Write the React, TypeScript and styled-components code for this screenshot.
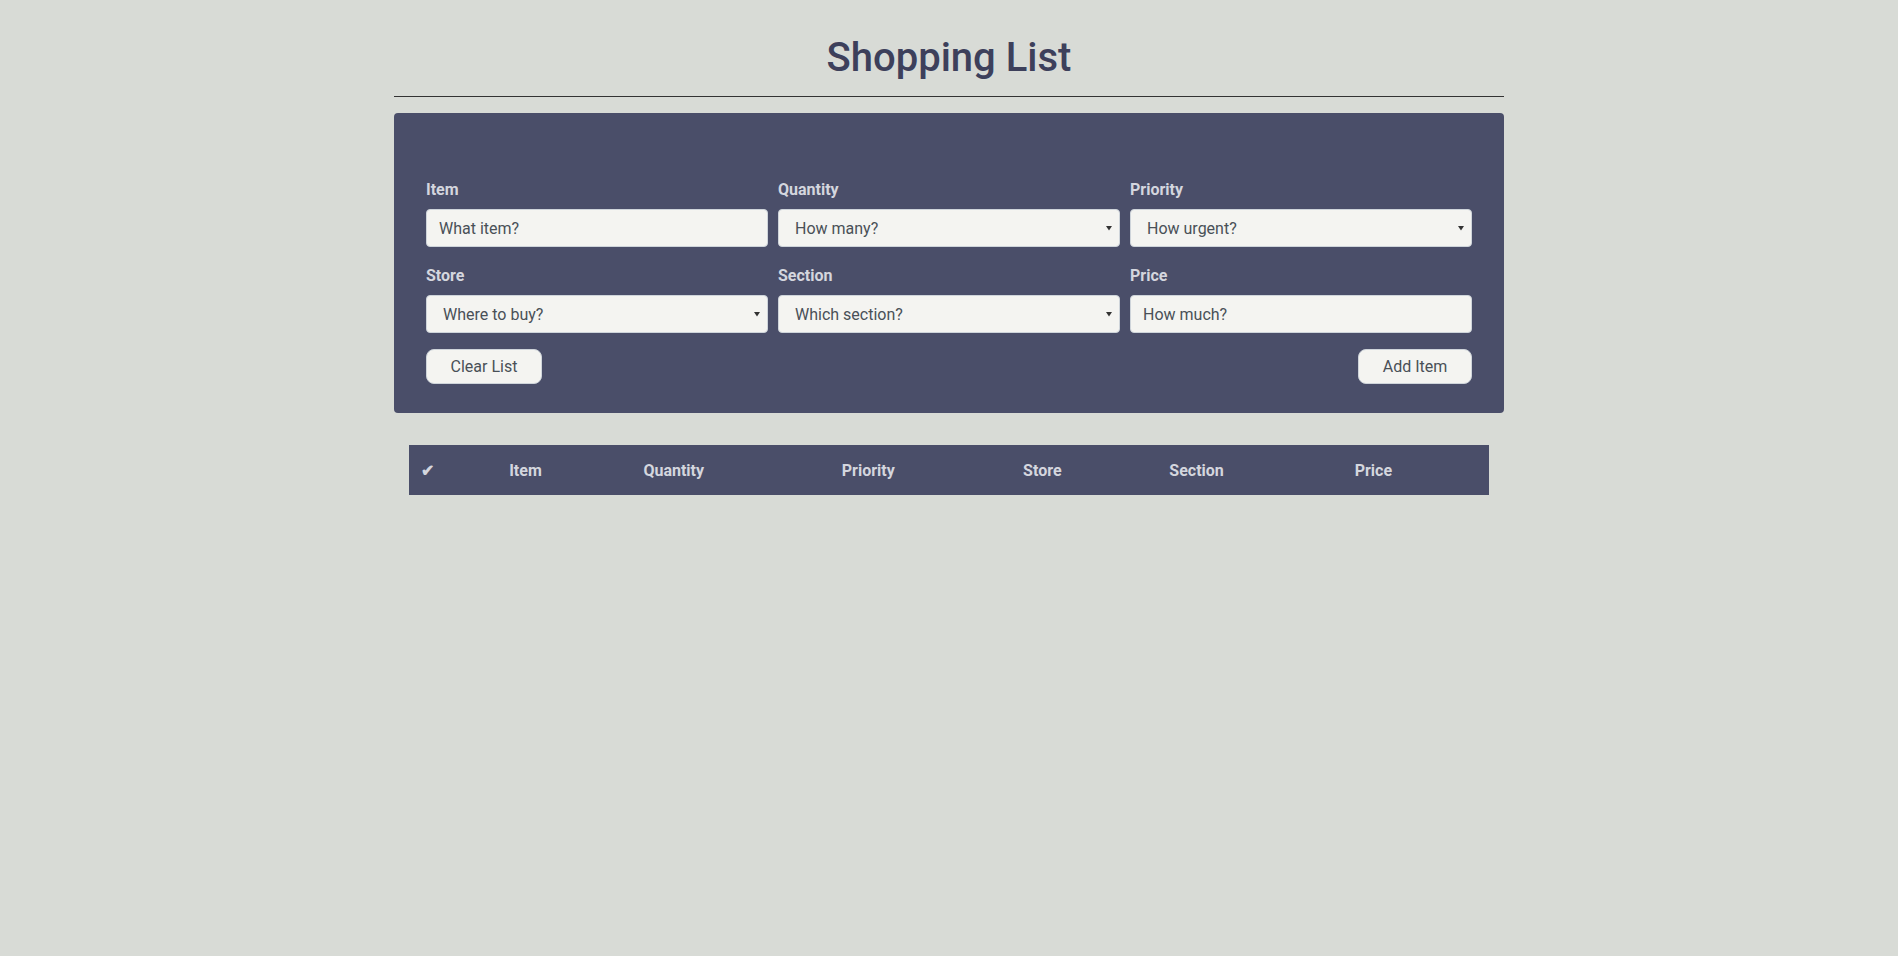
import styled, { createGlobalStyle } from "styled-components";
import React, { useState } from "react";

const GlobalStyle = createGlobalStyle`
  html, body {
    margin: 0;
    padding: 0;
    background-color: #d8dbd6;
    font-family: Roboto, "Liberation Sans", sans-serif;
  }
  * {
    box-sizing: border-box;
  }
`;

const Container = styled.div`
  max-width: 1140px;
  margin: 0 auto;
  padding: 0 15px;
`;

const Title = styled.h1`
  margin: 0;
  padding-top: 34px;
  padding-bottom: 14px;
  text-align: center;
  font-size: 40px;
  font-weight: 500;
  line-height: 1.2;
  color: #3d405b;
`;

const Divider = styled.hr`
  margin: 0 0 16px;
  border: none;
  border-top: 1px solid #333;
`;

const Panel = styled.form`
  background-color: #4a4e69;
  border-radius: 4px;
  padding: 67px 32px 29px;
`;

const FieldGrid = styled.div`
  display: grid;
  grid-template-columns: repeat(3, 1fr);
  column-gap: 10px;
  row-gap: 19px;
`;

const Field = styled.div`
  display: flex;
  flex-direction: column;
`;

const Label = styled.label`
  font-size: 16px;
  font-weight: 700;
  color: #d4d6de;
  margin-bottom: 10px;
  line-height: 1.2;
`;

const TextInput = styled.input`
  height: 38px;
  width: 100%;
  padding: 6px 12px;
  font-family: Roboto, "Liberation Sans", sans-serif;
  font-size: 16px;
  color: #495057;
  background-color: #f4f4f1;
  border: 1px solid #ced4da;
  border-radius: 4px;
  &::placeholder {
    color: #495057;
    opacity: 1;
  }
  &:focus {
    outline: none;
  }
`;

const SelectWrap = styled.div`
  position: relative;
`;

const Select = styled.select`
  appearance: none;
  -webkit-appearance: none;
  height: 38px;
  width: 100%;
  padding: 6px 12px 6px 16px;
  font-family: Roboto, "Liberation Sans", sans-serif;
  font-size: 16px;
  color: #495057;
  background-color: #f4f4f1;
  border: 1px solid #ced4da;
  border-radius: 4px;
  &:focus {
    outline: none;
  }
`;

const Caret = styled.svg`
  position: absolute;
  right: 8px;
  top: 16px;
  width: 6px;
  height: 6px;
  pointer-events: none;
`;

const ButtonRow = styled.div`
  display: flex;
  justify-content: space-between;
  margin-top: 16px;
`;

const ActionButton = styled.button<{ $width: number }>`
  width: ${(p) => p.$width}px;
  height: 35px;
  font-family: Roboto, "Liberation Sans", sans-serif;
  font-size: 16px;
  color: #495057;
  background-color: #f4f4f1;
  border: 1px solid #ced4da;
  border-radius: 8px;
  cursor: pointer;
`;

const Table = styled.table`
  width: calc(100% - 30px);
  margin: 32px 15px 0;
  border-collapse: collapse;
  table-layout: fixed;
`;

const HeadCell = styled.th<{ $width: number }>`
  width: ${(p) => p.$width}px;
  height: 50px;
  padding: 0 12px;
  text-align: left;
  background-color: #4a4e69;
  color: #d4d6de;
  font-size: 16px;
  font-weight: 700;
`;

type Option = { label: string; options: string[] };

const quantity: Option = { label: "How many?", options: ["1", "2", "3", "4", "5", "6+"] };
const priority: Option = { label: "How urgent?", options: ["Low", "Medium", "High"] };
const store: Option = { label: "Where to buy?", options: ["Grocery", "Pharmacy", "Hardware"] };
const section: Option = { label: "Which section?", options: ["Produce", "Dairy", "Bakery", "Frozen"] };

const columns = [
  { title: "✔", width: 88 },
  { title: "Item", width: 134 },
  { title: "Quantity", width: 198 },
  { title: "Priority", width: 181 },
  { title: "Store", width: 146 },
  { title: "Section", width: 185 },
  { title: "Price", width: 146 },
];

function Dropdown({ id, data }: { id: string; data: Option }) {
  return (
    <SelectWrap>
      <Select id={id} defaultValue="">
        <option value="" disabled>
          {data.label}
        </option>
        {data.options.map((o) => (
          <option key={o}>{o}</option>
        ))}
      </Select>
      <Caret viewBox="0 0 6 6">
        <path d="M0 1 L6 1 L3 5.5 Z" fill="#333" />
      </Caret>
    </SelectWrap>
  );
}

export default function App() {
  const [item, setItem] = useState("");
  const [price, setPrice] = useState("");

  const onSubmit = (e: React.FormEvent<HTMLFormElement>) => {
    e.preventDefault();
  };

  return (
    <>
      <GlobalStyle />
      <Container>
        <Title>Shopping List</Title>
        <Divider />
        <Panel onSubmit={onSubmit}>
          <FieldGrid>
            <Field>
              <Label htmlFor="item">Item</Label>
              <TextInput
                id="item"
                placeholder="What item?"
                value={item}
                onChange={(e) => setItem(e.target.value)}
              />
            </Field>
            <Field>
              <Label htmlFor="quantity">Quantity</Label>
              <Dropdown id="quantity" data={quantity} />
            </Field>
            <Field>
              <Label htmlFor="priority">Priority</Label>
              <Dropdown id="priority" data={priority} />
            </Field>
            <Field>
              <Label htmlFor="store">Store</Label>
              <Dropdown id="store" data={store} />
            </Field>
            <Field>
              <Label htmlFor="section">Section</Label>
              <Dropdown id="section" data={section} />
            </Field>
            <Field>
              <Label htmlFor="price">Price</Label>
              <TextInput
                id="price"
                placeholder="How much?"
                value={price}
                onChange={(e) => setPrice(e.target.value)}
              />
            </Field>
          </FieldGrid>
          <ButtonRow>
            <ActionButton type="button" $width={116} onClick={() => { setItem(""); setPrice(""); }}>
              Clear List
            </ActionButton>
            <ActionButton type="submit" $width={114}>
              Add Item
            </ActionButton>
          </ButtonRow>
        </Panel>
        <Table>
          <thead>
            <tr>
              {columns.map((c) => (
                <HeadCell key={c.title} $width={c.width}>
                  {c.title}
                </HeadCell>
              ))}
            </tr>
          </thead>
          <tbody />
        </Table>
      </Container>
    </>
  );
}
